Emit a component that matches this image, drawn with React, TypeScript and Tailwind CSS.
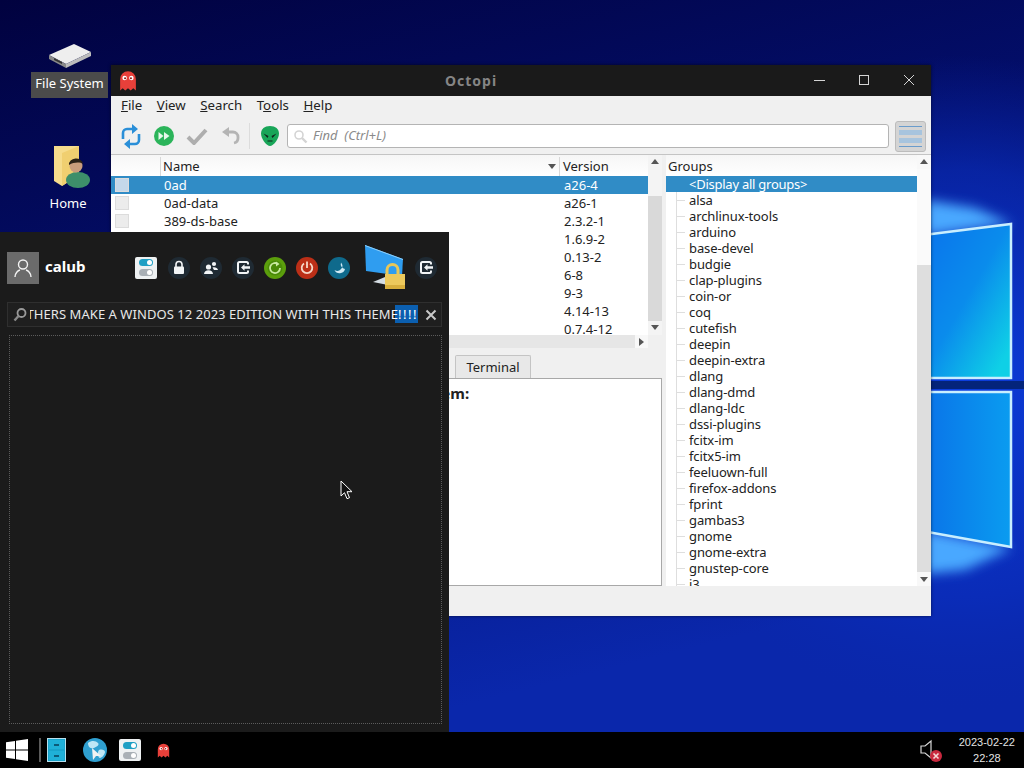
const versions = ['a26-4', 'a26-1', '2.3.2-1', '1.6.9-2', '0.13-2', '6-8', '9-3', '4.14-13', '0.7.4-12']
const packages = ['0ad', '0ad-data', '389-ds-base']
const groups = [
  'alsa', 'archlinux-tools', 'arduino', 'base-devel', 'budgie', 'clap-plugins', 'coin-or', 'coq', 'cutefish',
  'deepin', 'deepin-extra', 'dlang', 'dlang-dmd', 'dlang-ldc', 'dssi-plugins', 'fcitx-im', 'fcitx5-im',
  'feeluown-full', 'firefox-addons', 'fprint', 'gambas3', 'gnome', 'gnome-extra', 'gnustep-core', 'i3',
]
const menus = [
  ['F', 'ile'],
  ['V', 'iew'],
  ['S', 'earch'],
  ['T', 'o', 'ols'],
  ['H', 'elp'],
]

function Wallpaper() {
  return (
    <svg className="absolute inset-0" width="1024" height="732" viewBox="0 0 1024 732">
      <defs>
        <linearGradient id="bg" x1="0" y1="0" x2="0.35" y2="1">
          <stop offset="0" stopColor="#01023f" />
          <stop offset="0.45" stopColor="#030f6e" />
          <stop offset="1" stopColor="#0a27ab" />
        </linearGradient>
        <radialGradient id="glow" cx="960" cy="385" r="330" gradientUnits="userSpaceOnUse">
          <stop offset="0" stopColor="#0c3fe0" />
          <stop offset="0.65" stopColor="#0a2fc0" stopOpacity="0.6" />
          <stop offset="1" stopColor="#0a27ab" stopOpacity="0" />
        </radialGradient>
        <linearGradient id="pane" x1="0" y1="0" x2="1" y2="0.8">
          <stop offset="0" stopColor="#0a6cec" />
          <stop offset="0.6" stopColor="#0a8cec" />
          <stop offset="1" stopColor="#0fd0e6" />
        </linearGradient>
        <linearGradient id="pane2" x1="0" y1="0" x2="1" y2="0">
          <stop offset="0" stopColor="#0a68e6" />
          <stop offset="1" stopColor="#0a9cf0" />
        </linearGradient>
        <filter id="soft" x="-50%" y="-100%" width="200%" height="300%">
          <feGaussianBlur stdDeviation="6" />
        </filter>
        <filter id="edge">
          <feGaussianBlur stdDeviation="0.7" />
        </filter>
      </defs>
      <rect width="1024" height="732" fill="url(#bg)" />
      <rect width="1024" height="732" fill="url(#glow)" />
      <polygon points="925,200 975,208 1012,224 925,236" fill="#4aa8ff" filter="url(#soft)" />
      <polygon points="925,530 1012,548 965,570 925,574" fill="#4aa8ff" filter="url(#soft)" />
      <polygon points="900,238 1011,224 1011,378 900,378" fill="url(#pane)" />
      <polygon points="900,392 1011,392 1011,547 900,527" fill="url(#pane2)" />
      <polyline points="900,238 1011,224 1011,378 900,378" fill="none" stroke="#c8eeff" strokeWidth="2.500" filter="url(#edge)" />
      <polyline points="900,392 1011,392 1011,547 900,527" fill="none" stroke="#c8eeff" strokeWidth="2.500" filter="url(#edge)" />
      <rect x="900" y="381" width="124" height="8" fill="#04247a" />
    </svg>
  )
}

function Ghost({ size }: { size: number }) {
  return (
    <svg width={size} height={size * 1.25} viewBox="0 0 16 20">
      <path d="M1 9a7 7 0 0 1 14 0v10l-2.300-2-2.300 2-2.400-2-2.400 2-2.300-2L1 19z" fill="#e8403a" />
      <circle cx="5" cy="8" r="2" fill="#fff" />
      <circle cx="11" cy="8" r="2" fill="#fff" />
      <circle cx="5.400" cy="8.200" r="0.900" fill="#8a1410" />
      <circle cx="10.600" cy="8.200" r="0.900" fill="#8a1410" />
    </svg>
  )
}

function SettingsIcon() {
  return (
    <div className="flex h-[22px] w-[22px] flex-col items-center justify-center gap-[3px] rounded-[2px] bg-[#eef1f2]">
      <div className="flex h-[7px] w-[14px] items-center justify-end rounded-full bg-[#1f9fc4] pr-px">
        <div className="h-[5px] w-[5px] rounded-full bg-white" />
      </div>
      <div className="flex h-[7px] w-[14px] items-center justify-end rounded-full bg-[#a9b0b6] pr-px">
        <div className="h-[5px] w-[5px] rounded-full bg-white" />
      </div>
    </div>
  )
}

function LogoutGlyph() {
  return (
    <svg width="15" height="15" viewBox="0 0 15 15">
      <rect x="2" y="2" width="10" height="11" rx="1.500" fill="none" stroke="#f2f5f7" strokeWidth="2" />
      <rect x="10" y="4.500" width="4" height="6" fill="#1f2a33" />
      <polygon points="5,7.500 8.500,4.300 8.500,6.200 14,6.200 14,8.800 8.500,8.800 8.500,10.700" fill="#f2f5f7" />
    </svg>
  )
}

function RoundIcon({ bg, children }: { bg: string; children: React.ReactNode }) {
  return (
    <div className="flex h-[22px] w-[22px] items-center justify-center rounded-full" style={{ backgroundColor: bg }}>
      {children}
    </div>
  )
}

function SessionIcons() {
  return (
    <div className="flex items-center gap-[10px]">
      <SettingsIcon />
      <div className="ml-px">
        <RoundIcon bg="#1f2a33">
          <svg width="14" height="15" viewBox="0 0 14 15">
            <path d="M4 7V4.500a3 3 0 0 1 6 0V7" fill="none" stroke="#f2f5f7" strokeWidth="1.600" />
            <rect x="2" y="6.500" width="10" height="7.500" rx="1" fill="#f2f5f7" />
          </svg>
        </RoundIcon>
      </div>
      <RoundIcon bg="#1f2a33">
        <svg width="16" height="14" viewBox="0 0 16 14">
          <circle cx="5.500" cy="6" r="2.600" fill="#f2f5f7" />
          <path d="M1 13c0-2.500 2-3.800 4.500-3.800S10 10.500 10 13z" fill="#f2f5f7" />
          <circle cx="11" cy="3" r="2.100" fill="#f2f5f7" />
          <path d="M9.500 6.500c2.500-.6 5 .3 5.500 2.500h-4z" fill="#f2f5f7" />
        </svg>
      </RoundIcon>
      <RoundIcon bg="#1f2a33">
        <LogoutGlyph />
      </RoundIcon>
      <RoundIcon bg="#5b9e0c">
        <svg width="16" height="16" viewBox="0 0 16 16">
          <circle cx="8" cy="8" r="7.500" fill="#4a8a08" />
          <path d="M13 8a5 5 0 1 1-2.200-4.100" fill="none" stroke="#c9eaa0" strokeWidth="1.800" />
          <path d="M9 1.500 12.500 4 9 6.500z" fill="#c9eaa0" />
        </svg>
      </RoundIcon>
      <RoundIcon bg="#bc2f17">
        <svg width="16" height="16" viewBox="0 0 16 16">
          <path d="M5 3.500a5.300 5.300 0 1 0 6 0" fill="none" stroke="#f6d8c8" strokeWidth="1.800" />
          <path d="M8 1.500v6.500" stroke="#f6d8c8" strokeWidth="1.800" />
        </svg>
      </RoundIcon>
      <RoundIcon bg="#0f6a8c">
        <svg width="14" height="14" viewBox="0 0 14 14">
          <path d="M9 1.500a5 5 0 0 1-6.500 7.500A5.600 5.600 0 0 0 13 8 5 5 0 0 1 9 1.500z" fill="#cfeaf5" />
        </svg>
      </RoundIcon>
      <svg width="44" height="48" viewBox="0 0 44 48" className="ml-[3px]">
        <polygon points="2,1 40,15 39,32 3,27" fill="#2f9df0" />
        <polygon points="2,1 40,15 40,16 2,2" fill="#8fd0fb" />
        <polygon points="10,38 22,33 30,34 30,42" fill="#d5dde3" />
        <path d="M24 32v-6a5.500 5.500 0 0 1 11 0v6" fill="none" stroke="#e8c75a" strokeWidth="3" />
        <rect x="22" y="30" width="20" height="15" fill="#edc95c" />
        <rect x="22" y="41" width="20" height="4" fill="#d8ae3c" />
      </svg>
      <div className="ml-[-2px]">
        <RoundIcon bg="#1f2a33">
          <LogoutGlyph />
        </RoundIcon>
      </div>
    </div>
  )
}

function WhiskerMenu() {
  return (
    <div className="absolute bottom-0 left-0 flex h-[500px] w-[449px] flex-col bg-[#1b1b1b] px-[7px] pb-[8px] text-white">
      <div className="flex h-[70px] shrink-0 items-center pt-[1px]">
        <div className="flex h-8 w-8 items-center justify-center bg-[#6b6b6b]">
          <svg width="22" height="22" viewBox="0 0 22 22" fill="none" stroke="#f2f2f2" strokeWidth="1.400">
            <circle cx="11" cy="7.500" r="4.500" />
            <path d="M3 20c0-4 3-6.500 5-7M19 20c0-4-3-6.500-5-7" />
          </svg>
        </div>
        <span className="ml-[6px] w-[90px] pb-[2px] text-[15px] font-bold">calub</span>
        <SessionIcons />
      </div>
      <div className="flex h-[25px] w-[435px] shrink-0 items-center border border-[#2f2f2f] bg-[#1f1f1f]">
        <svg width="16" height="16" viewBox="0 0 16 16" className="ml-[4px] shrink-0">
          <circle cx="9.500" cy="6" r="4" fill="none" stroke="#9a9a9a" strokeWidth="1.800" />
          <path d="M6.500 9 2.500 13.500" stroke="#8a8a8a" strokeWidth="2.400" />
        </svg>
        <div className="ml-[2px] flex w-[388px] justify-end overflow-hidden pb-px">
          <span className="whitespace-nowrap text-[13px] leading-[18px] tracking-[0.05px] text-[#e8e8e8]">
            BROTHERS MAKE A WINDOS 12 2023 EDITION WITH THIS THEM
            <span className="bg-[linear-gradient(to_right,transparent_4px,#0b5fb0_4px)] text-white">
              E<span className="tracking-[1.5px]">!!!!</span>
            </span>
          </span>
        </div>
        <svg width="12" height="12" viewBox="0 0 12 12" className="ml-[7px] shrink-0" stroke="#c8c8c8" strokeWidth="2">
          <path d="M1.500 1.500l9 9M10.500 1.500l-9 9" />
        </svg>
      </div>
      <div className="mt-[8px] ml-[2px] min-h-0 w-[433px] flex-1 border border-dotted border-[#5c5c5c]" />
    </div>
  )
}

function Toolbar() {
  return (
    <div className="flex h-[37px] shrink-0 items-center border-b border-[#c4c4c4] bg-[#f0f0f0] pl-[10px] pr-[4px]">
      <svg width="20" height="25" viewBox="0 0 20 25" fill="none" stroke="#2a8fd8" strokeWidth="2.600">
        <path d="M2 15V9a4 4 0 0 1 4-4h6" />
        <path d="M18 10v6a4 4 0 0 1-4 4H8" />
        <path d="M11 0l6 5-6 5zM9 15l-6 5 6 5z" fill="#2a8fd8" stroke="none" />
      </svg>
      <svg width="20" height="20" viewBox="0 0 20 20" className="ml-[13px]">
        <circle cx="10" cy="10" r="10" fill="#2bb45a" />
        <path d="M4.500 6v8l5-4zM10 6v8l5.500-4z" fill="#e6f8ea" />
      </svg>
      <svg width="22" height="18" viewBox="0 0 22 18" className="ml-[12px]">
        <path d="M2 10l6 6L20 3" fill="none" stroke="#aeaeae" strokeWidth="4" />
      </svg>
      <svg width="19" height="18" viewBox="0 0 19 18" className="ml-[13px]">
        <path d="M6 5h6a5 5 0 0 1 5 5v1a5 5 0 0 1-4 5" fill="none" stroke="#b4b4b4" strokeWidth="2.800" />
        <path d="M8 0v10L1 5z" fill="#b4b4b4" />
      </svg>
      <div className="ml-[9px] mr-[10px] h-[26px] w-px bg-[#dcdcdc]" />
      <svg width="20" height="22" viewBox="0 0 20 22">
        <path d="M10 1C4.500 1 1 4 1 8.500 1 14 6.500 21 10 21s9-7 9-12.500C19 4 15.500 1 10 1z" fill="#18a558" />
        <path d="M3.500 8.500 8.500 11 7.500 13zM16.500 8.500 11.500 11 12.500 13z" fill="#10231a" />
        <path d="M7.500 16h5" stroke="#10231a" strokeWidth="1" />
      </svg>
      <div className="ml-[7px] flex h-[24px] w-[602px] items-center rounded-[3px] border border-[#b4b4b4] bg-white pl-[5px]">
        <svg width="15" height="15" viewBox="0 0 15 15" fill="none" stroke="#d4d4d4" strokeWidth="1.600">
          <circle cx="6" cy="6" r="4" />
          <path d="M9 9l4.500 4.500" strokeWidth="2.400" />
        </svg>
        <span className="ml-[5px] text-[13px] italic text-[#8a8a8a]">Find&nbsp; (Ctrl+L)</span>
      </div>
      <div className="ml-[6px] flex h-[31px] w-[31px] flex-col items-center justify-center gap-[3px] rounded-[3px] border border-[#bcbcbc] bg-[#d4d4d4]">
        <div className="h-[1px] w-[23px] bg-[#6a9ccc]" />
        <div className="h-[5px] w-[23px] bg-[#a7c4de]" />
        <div className="h-[5px] w-[23px] bg-[#a7c4de]" />
        <div className="h-[1px] w-[23px] bg-[#6a9ccc]" />
      </div>
    </div>
  )
}

function Arrow({ dir }: { dir: 'up' | 'down' | 'right' }) {
  const points = dir === 'up' ? '0,6 8,6 4,1' : dir === 'down' ? '0,1 8,1 4,6' : '1,0 1,8 6,4'
  return (
    <svg width="8" height="8" viewBox="0 0 8 8">
      <polygon points={points} fill="#555" />
    </svg>
  )
}

function PackageList() {
  return (
    <div className="flex h-[180px] shrink-0">
      <div className="flex min-w-0 flex-1 flex-col">
        <div className="flex h-[21px] shrink-0 items-center bg-[linear-gradient(#f6f6f6,#ffffff)] pt-[2px] text-[#222]">
          <div className="h-full w-[49px]" />
          <div className="flex h-full w-[399px] items-center justify-between border-l border-[#d8d8d8] pl-[2px] pr-[3px]">
            <span>Name</span>
            <svg width="8" height="6" viewBox="0 0 8 6">
              <polygon points="0,0 8,0 4,5" fill="#555" />
            </svg>
          </div>
          <div className="flex h-full flex-1 items-center border-l border-[#d8d8d8] pl-[3px]">Version</div>
        </div>
        <div className="min-h-0 flex-1 overflow-hidden bg-white">
          {versions.map((version, i) => (
            <div
              key={version}
              className={`flex h-[18px] items-center pt-[2px] ${i === 0 ? 'bg-[#308cc6] text-white' : 'text-[#222]'}`}
            >
              <div className="flex h-full w-[53px] items-center pb-[2px] pl-[4px]">
                <div className={`h-[14px] w-[14px] border border-[#dcdcdc] ${i === 0 ? 'bg-[#c4d8ea]' : 'bg-[#ececec]'}`} />
              </div>
              <div className="w-[400px]">{packages[i]}</div>
              <div>{version}</div>
            </div>
          ))}
        </div>
      </div>
      <div className="flex w-[14px] shrink-0 flex-col bg-[#f4f4f4]">
        <div className="flex h-[14px] items-center justify-center">
          <Arrow dir="up" />
        </div>
        <div className="h-[27px]" />
        <div className="flex-1 bg-[#d9d9d9]" />
        <div className="flex h-[14px] items-center justify-center">
          <Arrow dir="down" />
        </div>
      </div>
    </div>
  )
}

function LeftPane() {
  return (
    <div className="flex w-[551px] shrink-0 flex-col">
      <PackageList />
      <div className="flex h-[13px] shrink-0 items-center justify-between bg-[#e6e6e6]">
        <div />
        <div className="flex h-full w-[27px] items-center bg-[#f0f0f0]">
          <div className="flex h-full w-[13px] items-center justify-center bg-[#f8f8f8]">
            <Arrow dir="right" />
          </div>
        </div>
      </div>
      <div className="flex h-[30px] shrink-0 items-end bg-[#f0f0f0] pl-[344px]">
        <div className="flex h-[23px] w-[76px] items-center justify-center rounded-t-[2px] border border-b-0 border-[#c4c4c4] bg-[#e8e8e8] pt-[2px] text-[#222]">
          Terminal
        </div>
      </div>
      <div className="min-h-0 flex-1 border border-[#a8a8a8] bg-white pl-[317px] pt-[3px] text-[15px] font-bold text-[#222]">
        Item:
      </div>
    </div>
  )
}

function GroupsPane() {
  return (
    <div className="ml-[4px] flex h-[431px] min-w-0 flex-1">
      <div className="flex w-[251px] flex-col">
        <div className="flex h-[21px] shrink-0 items-center bg-[linear-gradient(#f6f6f6,#ffffff)] pl-[2px] pt-[2px] text-[#222]">Groups</div>
        <div className="min-h-0 flex-1 overflow-hidden bg-white leading-[16px] tracking-[-0.1px]">
          <div className="flex h-4 items-center bg-[#308cc6] pl-[23px] tracking-[-0.25px] text-white">&lt;Display all groups&gt;</div>
          {groups.map((group) => (
            <div key={group} className="relative flex h-4 items-center pl-[23px] text-[#222]">
              <div className="absolute inset-y-0 left-[10px] w-px bg-[#dedede]" />
              <div className="absolute left-[10px] top-[8px] h-px w-[9px] bg-[#dedede]" />
              {group}
            </div>
          ))}
        </div>
      </div>
      <div className="flex w-[14px] shrink-0 flex-col bg-[#f8f8f8]">
        <div className="flex h-[14px] items-center justify-center">
          <Arrow dir="up" />
        </div>
        <div className="h-[96px] bg-[#fafafa]" />
        <div className="flex-1 bg-[#dedede]" />
        <div className="flex h-[14px] items-center justify-center pt-[2px]">
          <Arrow dir="down" />
        </div>
      </div>
    </div>
  )
}

function OctopiWindow() {
  return (
    <div className="absolute left-[111px] top-[65px] flex h-[551px] w-[820px] flex-col bg-[#f0f0f0] text-[13px] shadow-[0_0_3px_rgba(0,0,0,0.6)]">
      <div className="relative flex h-[31px] shrink-0 items-center bg-[#1a1a1a] pb-[1px] pl-[8px]">
        <Ghost size={18} />
        <span className="absolute left-[334px] text-[14px] font-bold tracking-[1px] text-[#858585]">Octopi</span>
        <svg width="100" height="12" viewBox="0 0 100 12" className="absolute right-[17px]" fill="none" stroke="#d4d4d4">
          <path d="M0 6.500h11" />
          <rect x="45.500" y="1.500" width="9" height="9" />
          <path d="M90 1l10 10M100 1 90 11" />
        </svg>
      </div>
      <div className="flex h-[22px] shrink-0 items-center gap-[14.5px] pb-[2px] pl-[10px] text-[13.25px] text-[#222]">
        {menus.map((parts) => (
          <span key={parts.join('')}>
            {parts.length === 3 ? parts[0] : <span className="underline">{parts[0]}</span>}
            {parts.length === 3 ? <span className="underline">{parts[1]}</span> : null}
            {parts.length === 3 ? parts[2] : parts[1]}
          </span>
        ))}
      </div>
      <Toolbar />
      <div className="flex h-[431px] shrink-0">
        <LeftPane />
        <GroupsPane />
      </div>
    </div>
  )
}

function DesktopIcons() {
  return (
    <>
      <div className="absolute left-[31px] top-[44px] flex w-[77px] flex-col items-center">
        <svg width="44" height="24" viewBox="0 0 44 24">
          <polygon points="1,11 26,0 43,8 18,20" fill="#eeeeee" />
          <polygon points="1,11 18,20 18,24 1,15" fill="#8a8a8a" />
          <polygon points="18,20 43,8 43,12 18,24" fill="#bcbcbc" />
          <polygon points="6,14 14,18 14,20 6,16" fill="#333" />
        </svg>
        <div className="mt-[4px] flex h-[26px] w-full items-center justify-center bg-[#4b4b4b] pb-[2px] text-[13px] text-white">
          File System
        </div>
      </div>
      <div className="absolute left-[33px] top-[145px] flex w-[70px] flex-col items-center">
        <svg width="38" height="43" viewBox="0 0 38 43" className="ml-[8px]">
          <polygon points="1,1 26,1 26,30 9,41 1,36" fill="#f6dc8c" />
          <polygon points="9,8 26,1 26,30 9,41" fill="#f0cf70" />
          <ellipse cx="25" cy="35" rx="12" ry="8" fill="#3d8f6a" />
          <circle cx="23" cy="21" r="6.500" fill="#c99d7c" />
          <path d="M16 20a7 6 0 0 1 14-1c-3-2-9-2-14 1z" fill="#2b2218" />
        </svg>
        <div className="mt-[6px] text-[13px] text-white">Home</div>
      </div>
    </>
  )
}

function Panel() {
  return (
    <div className="flex h-9 shrink-0 items-center bg-black text-white">
      <svg width="22" height="22" viewBox="0 0 22 22" className="ml-[6px]">
        <path d="M0 3.200 9 2v8.500H0zM10 1.800 22 0v10.500H10zM0 11.500h9V20L0 18.800zM10 11.500h12V22l-12-1.800z" fill="#fff" />
      </svg>
      <div className="ml-[11px] h-[24px] w-[2px] bg-[#5a5a5a]" />
      <div className="ml-[6px] flex h-[24px] w-[19px] flex-col gap-[2px] border border-[#b8e0ee] bg-[#18a4cc] p-[1px]">
        <div className="flex flex-1 items-center justify-center bg-[#1fb0d8]">
          <div className="h-[2px] w-[5px] bg-[#0c5a78]" />
        </div>
        <div className="flex flex-1 items-center justify-center bg-[#1fb0d8]">
          <div className="h-[2px] w-[5px] bg-[#0c5a78]" />
        </div>
      </div>
      <svg width="24" height="24" viewBox="0 0 24 24" className="ml-[17px]">
        <circle cx="12" cy="12" r="12" fill="#2f9fd0" />
        <path d="M5 5c4-3 8-2 10 0s-2 4-4 5-6 0-6-5zM16 12c3-1 6 0 6 2s-3 6-5 6-3-6-1-8z" fill="#bfe6f5" />
        <path d="M9 10l1 12 3-4 5 0z" fill="#f2f2f2" />
      </svg>
      <div className="ml-[12px]">
        <SettingsIcon />
      </div>
      <div className="ml-[16px]">
        <Ghost size={13} />
      </div>
      <svg width="22" height="24" viewBox="0 0 22 24" className="ml-auto">
        <path d="M1 8h4l6-5v17l-6-5H1z" fill="none" stroke="#d8d8d8" strokeWidth="1.200" />
        <circle cx="16" cy="18" r="6" fill="#c8283e" />
        <path d="M13.500 15.500l5 5M18.500 15.500l-5 5" stroke="#f6d8d8" strokeWidth="1.600" />
      </svg>
      <div className="ml-[17px] mr-[9px] flex flex-col items-center font-['Liberation_Sans',sans-serif] text-[11px] leading-[16px] text-[#e4e4e4]">
        <span>2023-02-22</span>
        <span>22:28</span>
      </div>
    </div>
  )
}

export default function App() {
  return (
    <div className="flex h-[768px] w-[1024px] flex-col overflow-hidden font-['Noto_Sans',sans-serif]">
      <div className="relative min-h-0 flex-1">
        <Wallpaper />
        <DesktopIcons />
        <OctopiWindow />
        <WhiskerMenu />
        <svg width="14" height="20" viewBox="0 0 14 20" className="absolute left-[340px] top-[480px]">
          <path d="M1 1v15l3.500-3.300 2.500 6 2.500-1-2.500-6h5z" fill="#111" stroke="#fff" strokeWidth="1" />
        </svg>
      </div>
      <Panel />
    </div>
  )
}
